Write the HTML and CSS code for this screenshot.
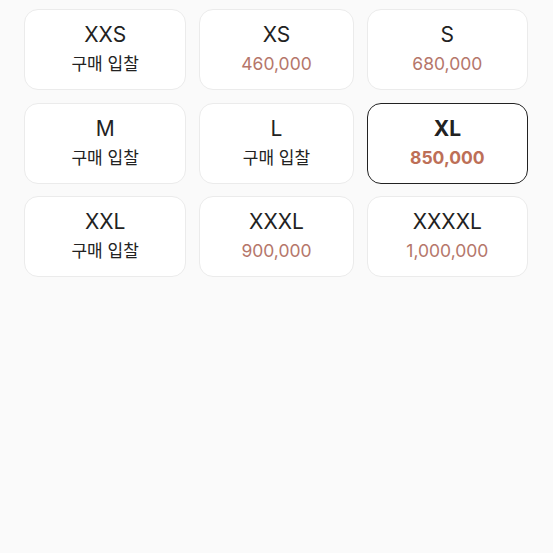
FILE: index.html
```html
<!DOCTYPE html>
<html lang="ko">
<head>
<meta charset="utf-8">
<link rel="stylesheet" href="styles.css">
</head>
<body>
<div class="grid">
  <div class="card"><div class="size">XXS</div><div class="sub">구매 입찰</div></div>
  <div class="card"><div class="size">XS</div><div class="price">460,000</div></div>
  <div class="card"><div class="size">S</div><div class="price">680,000</div></div>
  <div class="card"><div class="size">M</div><div class="sub">구매 입찰</div></div>
  <div class="card"><div class="size">L</div><div class="sub">구매 입찰</div></div>
  <div class="card selected"><div class="size">XL</div><div class="price">850,000</div></div>
  <div class="card"><div class="size">XXL</div><div class="sub">구매 입찰</div></div>
  <div class="card"><div class="size">XXXL</div><div class="price">900,000</div></div>
  <div class="card"><div class="size">XXXXL</div><div class="price">1,000,000</div></div>
</div>
</body>
</html>
```
FILE: styles.css
```css
html, body {
  margin: 0;
  padding: 0;
  background: #fafafa;
}
body {
  font-family: Inter, "Noto Sans CJK KR", sans-serif;
  color: #222;
}
.grid {
  display: grid;
  grid-template-columns: 162fr 154fr 161fr;
  column-gap: 13px;
  row-gap: 12.5px;
  padding: 9px 25px 0 24px;
}
.card {
  height: 81px;
  box-sizing: border-box;
  background: #fff;
  border: 1px solid #ebebeb;
  border-radius: 14px;
  display: flex;
  flex-direction: column;
  align-items: center;
  justify-content: center;
  gap: 1px;
}
.size {
  font-size: 21px;
  line-height: 28px;
  color: #222;
}
.sub {
  font-size: 17px;
  line-height: 28px;
  color: #222;
}
.price {
  font-size: 17.5px;
  line-height: 28px;
  color: #b5766a;
}
.selected {
  border: 1.5px solid #222;
}
.selected .size {
  font-weight: 700;
}
.selected .price {
  font-weight: 700;
  color: #bd6f57;
}
```
